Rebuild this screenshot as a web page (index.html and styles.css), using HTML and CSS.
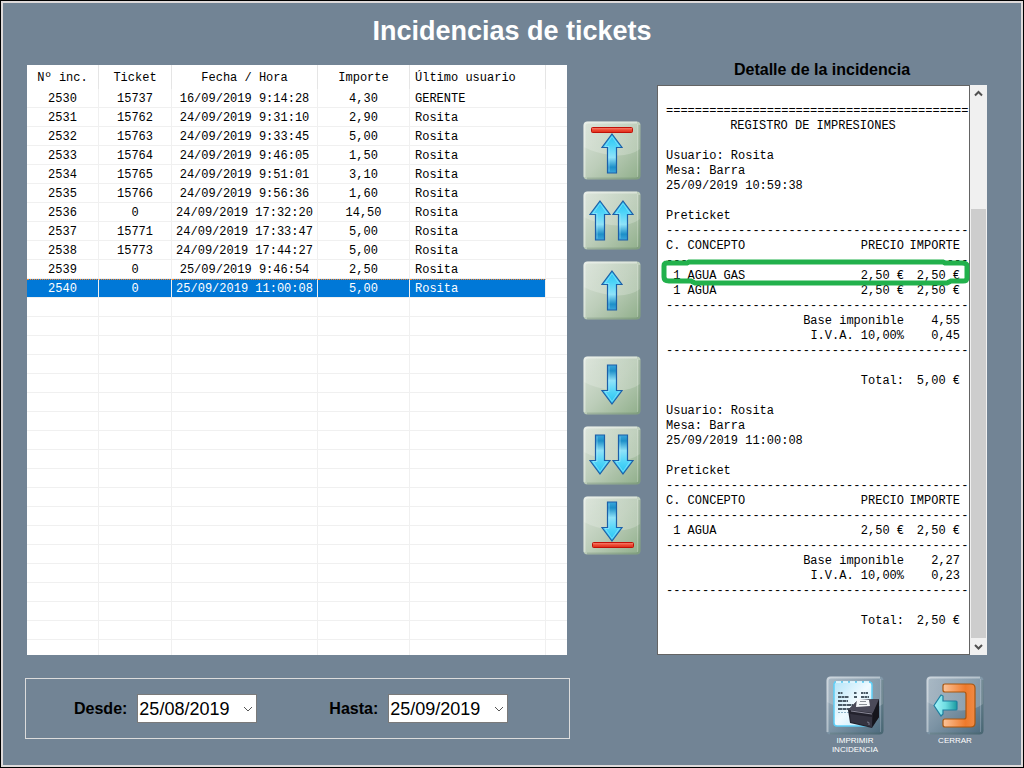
FILE: index.html
```html
<!DOCTYPE html>
<html lang="es">
    <head>
        <meta charset="utf-8">
        <title>Incidencias de tickets</title>
        <link rel="stylesheet" href="styles.css">
    </head>
    <body>
        <!-- shared shapes for the button icons -->
        <svg class="defs" width="0" height="0" aria-hidden="true">
            <defs>
                <linearGradient id="green" x1="0" y1="0" x2="1" y2="1">
                    <stop offset="0" stop-color="#dbe4da"/>
                    <stop offset="0.5" stop-color="#bccdb9"/>
                    <stop offset="1" stop-color="#8fae8a"/>
                </linearGradient>
                <linearGradient id="steel" x1="0" y1="0" x2="1" y2="1">
                    <stop offset="0" stop-color="#a6b6c3"/>
                    <stop offset="0.5" stop-color="#7c93a4"/>
                    <stop offset="1" stop-color="#4b697c"/>
                </linearGradient>
                <linearGradient id="gloss" x1="0" y1="0" x2="0" y2="1">
                    <stop offset="0" stop-color="#fff" stop-opacity="0.05"/>
                    <stop offset="1" stop-color="#fff" stop-opacity="0.22"/>
                </linearGradient>
                <linearGradient id="blue" x1="0" y1="0" x2="0" y2="1">
                    <stop offset="0" stop-color="#25c3f2"/>
                    <stop offset="0.3" stop-color="#4fd4f8"/>
                    <stop offset="0.6" stop-color="#8fe2f8"/>
                    <stop offset="0.85" stop-color="#1d8fc8"/>
                    <stop offset="1" stop-color="#3aa6dc"/>
                </linearGradient>
                <linearGradient id="red" x1="0" y1="0" x2="0" y2="1">
                    <stop offset="0" stop-color="#f58a78"/>
                    <stop offset="0.5" stop-color="#ee4a34"/>
                    <stop offset="1" stop-color="#dd2a18"/>
                </linearGradient>
                <linearGradient id="orange" x1="0" y1="0" x2="1" y2="0">
                    <stop offset="0" stop-color="#fbc49a"/>
                    <stop offset="0.7" stop-color="#ee7a2c"/>
                    <stop offset="1" stop-color="#f08a44"/>
                </linearGradient>
                <linearGradient id="teal" x1="0" y1="0" x2="1" y2="0">
                    <stop offset="0" stop-color="#a8f6fb"/>
                    <stop offset="0.5" stop-color="#6fdde2"/>
                    <stop offset="1" stop-color="#1a9aa0"/>
                </linearGradient>
                <linearGradient id="paper" x1="0" y1="0" x2="1" y2="1">
                    <stop offset="0" stop-color="#b4e4f8"/>
                    <stop offset="0.5" stop-color="#f0faff"/>
                    <stop offset="1" stop-color="#b8e6f8"/>
                </linearGradient>
            </defs>
            <symbol id="tile" viewBox="0 0 58 59">
                <rect x="0.5" y="0.5" width="57" height="58" rx="4"/>
                <path d="M1 5Q1 1 5 1H53Q57 1 57 5V28Q46 36 28 34Q12 32 1 26Z" fill="url(#gloss)"/>
                <path d="M1.5 56V5Q1.5 1.5 5 1.5H54" fill="none" stroke="#fff" stroke-opacity="0.4" stroke-width="2"/>
                <path d="M56.5 4V54Q56.5 57.5 53 57.5H4" fill="none" stroke="#3d5a4a" stroke-opacity="0.2" stroke-width="2"/>
                <path d="M54.500 3V56" fill="none" stroke="#fff" stroke-opacity="0.2"/>
            </symbol>
            <symbol id="arrow" viewBox="0 0 22 41">
                <path d="M11 1L21 14.500H15.500V40H6.500V14.500H1Z" fill="url(#blue)" stroke="#1c5fa8" stroke-width="1.200"/>
                <path d="M8 38.500V13.500H4L11 3.500L18 13.500" fill="none" stroke="#b9f1ff" stroke-opacity="0.55" stroke-width="0.800"/>
            </symbol>
            <symbol id="bar" viewBox="0 0 42 6">
                <rect x="0.5" y="0.5" width="41" height="5" rx="1" fill="url(#red)" stroke="#c01008"/>
            </symbol>
        </svg>

        <h1>Incidencias de tickets</h1>

        <main>
            <div id="TicketList">
                <table>
                    <colgroup>
                        <col class="c-num"><col class="c-ticket"><col class="c-date"><col class="c-amount"><col class="c-user"><col>
                    </colgroup>
                    <thead>
                        <tr><th>Nº inc.</th><th>Ticket</th><th>Fecha / Hora</th><th>Importe</th><th>Último usuario</th><th></th></tr>
                    </thead>
                    <tbody>
                        <tr><td>2530</td><td>15737</td><td>16/09/2019 9:14:28</td><td>4,30</td><td>GERENTE</td><td></td></tr>
                        <tr><td>2531</td><td>15762</td><td>24/09/2019 9:31:10</td><td>2,90</td><td>Rosita</td><td></td></tr>
                        <tr><td>2532</td><td>15763</td><td>24/09/2019 9:33:45</td><td>5,00</td><td>Rosita</td><td></td></tr>
                        <tr><td>2533</td><td>15764</td><td>24/09/2019 9:46:05</td><td>1,50</td><td>Rosita</td><td></td></tr>
                        <tr><td>2534</td><td>15765</td><td>24/09/2019 9:51:01</td><td>3,10</td><td>Rosita</td><td></td></tr>
                        <tr><td>2535</td><td>15766</td><td>24/09/2019 9:56:36</td><td>1,60</td><td>Rosita</td><td></td></tr>
                        <tr><td>2536</td><td>0</td><td>24/09/2019 17:32:20</td><td>14,50</td><td>Rosita</td><td></td></tr>
                        <tr><td>2537</td><td>15771</td><td>24/09/2019 17:33:47</td><td>5,00</td><td>Rosita</td><td></td></tr>
                        <tr><td>2538</td><td>15773</td><td>24/09/2019 17:44:27</td><td>5,00</td><td>Rosita</td><td></td></tr>
                        <tr><td>2539</td><td>0</td><td>25/09/2019 9:46:54</td><td>2,50</td><td>Rosita</td><td></td></tr>
                        <tr class="selected"><td>2540</td><td>0</td><td>25/09/2019 11:00:08</td><td>5,00</td><td>Rosita</td><td></td></tr>
                        <!-- empty rows down to the end of the list -->
                        <tr><td></td><td></td><td></td><td></td><td></td><td></td></tr>
                        <tr><td></td><td></td><td></td><td></td><td></td><td></td></tr>
                        <tr><td></td><td></td><td></td><td></td><td></td><td></td></tr>
                        <tr><td></td><td></td><td></td><td></td><td></td><td></td></tr>
                        <tr><td></td><td></td><td></td><td></td><td></td><td></td></tr>
                        <tr><td></td><td></td><td></td><td></td><td></td><td></td></tr>
                        <tr><td></td><td></td><td></td><td></td><td></td><td></td></tr>
                        <tr><td></td><td></td><td></td><td></td><td></td><td></td></tr>
                        <tr><td></td><td></td><td></td><td></td><td></td><td></td></tr>
                        <tr><td></td><td></td><td></td><td></td><td></td><td></td></tr>
                        <tr><td></td><td></td><td></td><td></td><td></td><td></td></tr>
                        <tr><td></td><td></td><td></td><td></td><td></td><td></td></tr>
                        <tr><td></td><td></td><td></td><td></td><td></td><td></td></tr>
                        <tr><td></td><td></td><td></td><td></td><td></td><td></td></tr>
                        <tr><td></td><td></td><td></td><td></td><td></td><td></td></tr>
                        <tr><td></td><td></td><td></td><td></td><td></td><td></td></tr>
                        <tr><td></td><td></td><td></td><td></td><td></td><td></td></tr>
                        <tr><td></td><td></td><td></td><td></td><td></td><td></td></tr>
                        <tr><td></td><td></td><td></td><td></td><td></td><td></td></tr>
                    </tbody>
                </table>
            </div>

            <div id="MoveButtons">
                <div class="group">
                    <button type="button" aria-label="Primero">
                        <svg viewBox="0 0 58 59"><use href="#tile" fill="url(#green)" width="58" height="59"/><use href="#bar" x="8" y="6" width="42" height="6"/><use href="#arrow" x="18" y="12" width="22" height="41"/></svg>
                    </button>
                    <button type="button" aria-label="Página anterior">
                        <svg viewBox="0 0 58 59"><use href="#tile" fill="url(#green)" width="58" height="59"/><use href="#arrow" x="6" y="9" width="22" height="41"/><use href="#arrow" x="29" y="9" width="22" height="41"/></svg>
                    </button>
                    <button type="button" aria-label="Anterior">
                        <svg viewBox="0 0 58 59"><use href="#tile" fill="url(#green)" width="58" height="59"/><use href="#arrow" x="18" y="9" width="22" height="41"/></svg>
                    </button>
                </div>
                <div class="group">
                    <button type="button" aria-label="Siguiente">
                        <svg viewBox="0 0 58 59"><use href="#tile" fill="url(#green)" width="58" height="59"/><g transform="matrix(1 0 0 -1 0 58)"><use href="#arrow" x="18" y="9" width="22" height="41"/></g></svg>
                    </button>
                    <button type="button" aria-label="Página siguiente">
                        <svg viewBox="0 0 58 59"><use href="#tile" fill="url(#green)" width="58" height="59"/><g transform="matrix(1 0 0 -1 0 58)"><use href="#arrow" x="6" y="9" width="22" height="41"/><use href="#arrow" x="29" y="9" width="22" height="41"/></g></svg>
                    </button>
                    <button type="button" aria-label="Último">
                        <svg viewBox="0 0 58 59"><use href="#tile" fill="url(#green)" width="58" height="59"/><use href="#bar" x="9" y="46" width="42" height="6"/><g transform="matrix(1 0 0 -1 0 58)"><use href="#arrow" x="18" y="12" width="22" height="41"/></g></svg>
                    </button>
                </div>
            </div>

            <section id="Detail">
                <h2>Detalle de la incidencia</h2>
                <div id="DetailBox">
                    <div id="Receipt">
                        <table>
                            <colgroup><col><col class="c-price"><col class="c-total"></colgroup>
                            <tr><td colspan="3"></td></tr>
                            <tr><td colspan="3">==========================================</td></tr>
                            <tr><td colspan="3" class="center">REGISTRO DE IMPRESIONES</td></tr>
                            <tr><td colspan="3"></td></tr>
                            <tr><td colspan="3">Usuario: Rosita</td></tr>
                            <tr><td colspan="3">Mesa: Barra</td></tr>
                            <tr><td colspan="3">25/09/2019 10:59:38</td></tr>
                            <tr><td colspan="3"></td></tr>
                            <tr><td colspan="3">Preticket</td></tr>
                            <tr><td colspan="3">------------------------------------------</td></tr>
                            <tr><td>C. CONCEPTO</td><td>PRECIO</td><td>IMPORTE</td></tr>
                            <tr><td colspan="3">------------------------------------------</td></tr>
                            <tr class="marked">
                                <td> 1 AGUA GAS<svg class="mark" viewBox="0 0 310 30" preserveAspectRatio="none" aria-hidden="true"><path d="M5 6H26L28 5H282L284 6H301Q306 6 306 9V21Q306 24 302 24H290L286 26H34L30 24H8Q3 24 3 20V9Q3 6 6 6Z"/></svg></td>
                                <td>2,50 €</td><td>2,50 €</td>
                            </tr>
                            <tr><td> 1 AGUA</td><td>2,50 €</td><td>2,50 €</td></tr>
                            <tr><td colspan="3">------------------------------------------</td></tr>
                            <tr><td colspan="2" class="right">Base imponible</td><td>4,55</td></tr>
                            <tr><td colspan="2" class="right">I.V.A. 10,00%</td><td>0,45</td></tr>
                            <tr><td colspan="3">------------------------------------------</td></tr>
                            <tr><td colspan="3"></td></tr>
                            <tr><td colspan="2" class="right">Total:</td><td>5,00 €</td></tr>
                            <tr><td colspan="3"></td></tr>
                            <tr><td colspan="3">Usuario: Rosita</td></tr>
                            <tr><td colspan="3">Mesa: Barra</td></tr>
                            <tr><td colspan="3">25/09/2019 11:00:08</td></tr>
                            <tr><td colspan="3"></td></tr>
                            <tr><td colspan="3">Preticket</td></tr>
                            <tr><td colspan="3">------------------------------------------</td></tr>
                            <tr><td>C. CONCEPTO</td><td>PRECIO</td><td>IMPORTE</td></tr>
                            <tr><td colspan="3">------------------------------------------</td></tr>
                            <tr><td> 1 AGUA</td><td>2,50 €</td><td>2,50 €</td></tr>
                            <tr><td colspan="3">------------------------------------------</td></tr>
                            <tr><td colspan="2" class="right">Base imponible</td><td>2,27</td></tr>
                            <tr><td colspan="2" class="right">I.V.A. 10,00%</td><td>0,23</td></tr>
                            <tr><td colspan="3">------------------------------------------</td></tr>
                            <tr><td colspan="3"></td></tr>
                            <tr><td colspan="2" class="right">Total:</td><td>2,50 €</td></tr>
                        </table>
                    </div>
                    <div id="ScrollBar">
                        <button type="button" aria-label="Subir"><svg viewBox="0 0 15 17"><path d="M4 10.500L7.500 7L11 10.500"/></svg></button>
                        <div class="track"><div class="thumb"></div></div>
                        <button type="button" aria-label="Bajar"><svg viewBox="0 0 15 17"><path d="M4 7L7.500 10.500L11 7"/></svg></button>
                    </div>
                </div>
            </section>
        </main>

        <footer>
            <form id="Dates">
                <label for="desde">Desde:</label>
                <div class="date">
                    <select id="desde"><option>25/08/2019</option></select>
                    <svg viewBox="0 0 10 6" aria-hidden="true"><path d="M1 1L5 5L9 1"/></svg>
                </div>
                <label for="hasta">Hasta:</label>
                <div class="date">
                    <select id="hasta"><option>25/09/2019</option></select>
                    <svg viewBox="0 0 10 6" aria-hidden="true"><path d="M1 1L5 5L9 1"/></svg>
                </div>
            </form>
            <div id="Actions">
                <button type="button">
                    <svg viewBox="0 0 58 59" aria-hidden="true">
                        <use href="#tile" fill="url(#steel)" width="58" height="59"/>
                        <path d="M9 6H43Q46 6 46 9V50H11Q8 50 8 47V8Z" fill="url(#paper)" stroke="#5fd0f8" stroke-width="1.500"/>
                        <path d="M10 6H44" stroke="#fff" stroke-width="1.500" stroke-dasharray="5 2"/>
                        <g stroke="#4a5a66" stroke-width="2">
                            <path d="M12 17H17M28 17H31M35 17H42" stroke-dasharray="2 0.500"/>
                            <path d="M12 21H23M28 21H31M35 21H43" stroke-dasharray="3 0.500"/>
                            <path d="M12 25H22M12 29H27M12 33H24" stroke-dasharray="4 0.500"/>
                        </g>
                        <path d="M12 36.500H24" stroke="#8eb4c8" stroke-dasharray="2 1"/>
                        <path d="M22 34L32 24L53 23L53 41L46 52L24 47Z" fill="#23222d"/>
                        <path d="M22 34L32 24L53 23L47 37Z" fill="#4b4a59"/>
                        <path d="M24 38L46 41V51L25 46Z" fill="#343340"/>
                        <path d="M47 37L53 24V41L46 51Z" fill="#15151c"/>
                        <path d="M25 35L46 38" stroke="#8a8998" stroke-width="1.200"/>
                        <path d="M31 23L43 24L44 30L30 31Z" fill="#f6f8fa"/>
                        <path d="M34 25.500H40M33 28.500H41" stroke="#8d9298" stroke-width="1"/>
                        <path d="M41 46L43 46.500V49" fill="none" stroke="#777688"/>
                    </svg>
                    <span>IMPRIMIR INCIDENCIA</span>
                </button>
                <button type="button">
                    <svg viewBox="0 0 58 59" aria-hidden="true">
                        <use href="#tile" fill="url(#steel)" width="58" height="59"/>
                        <path d="M19 8H45Q49 8 49 12V47Q49 51 45 51H19Q17 51 17 49V45Q17 43 19 43H38Q40 43 40 41V18Q40 16 38 16H19Q17 16 17 14V10Q17 8 19 8Z" fill="url(#orange)" stroke="#a8560f" stroke-width="1.200"/>
                        <path d="M8 29.500L15 19L17 20V25H30Q31 25 31 26V33Q31 34 30 34H17V38L15 40Z" fill="url(#teal)" stroke="#1f7fa0" stroke-width="1.200"/>
                    </svg>
                    <span>CERRAR</span>
                </button>
            </div>
        </footer>
    </body>
</html>
```
FILE: styles.css
```css
*{
    box-sizing: border-box;
}

html{
    height: 100%;
    background-color: black;
    padding: 1px;
}

body{
    height: 100%;
    margin: 0;
    border: 2px solid #dedada;
    background-color: #728495;
    font-family: "Liberation Sans", Arial, sans-serif;
    color: black;
    display: flex;
    flex-direction: column;
}

.defs{
    position: absolute;
}

h1{
    margin: 0;
    color: white;
    font-size: 27px;
    line-height: 57px;
    text-align: center;
}

button{
    border: none;
    padding: 0;
    background: none;
    cursor: pointer;
}

table{
    width: 100%;
    table-layout: fixed;
    border-collapse: separate;
    border-spacing: 0;
    font-family: "Liberation Mono", "Courier New", monospace;
    font-size: 12px;
}

main{
    flex: 1;
    min-height: 0;
    padding: 0 34px 0 24px;
    display: grid;
    grid-template-columns: minmax(0, 540fr) 58px minmax(0, 330fr);
    grid-template-rows: minmax(0, 1fr);
    column-gap: 16px;
}

/* list of tickets */
#TicketList{
    margin-top: 5px;
    background-color: white;
    overflow: hidden;
}

#TicketList th{
    height: 24px;
    padding: 2px 0 0;
    border-right: 1px solid #e5e5e5;
    font-weight: normal;
}

#TicketList td{
    height: 19px;
    padding: 2px 0 0;
    border-right: 1px solid #f0f0f0;
    border-bottom: 1px solid #f0f0f0;
    line-height: 16px;
    text-align: center;
    white-space: nowrap;
}

#TicketList th:nth-child(5), #TicketList td:nth-child(5){
    padding-left: 5px;
    text-align: left;
}

#TicketList th:last-child, #TicketList td:last-child{
    border-right: none;
}

#TicketList .selected td:not(:last-child){
    padding-top: 1px;
    border-top: 1px dotted #ff8728;
    background-color: #0078d7;
    color: white;
}

.c-num{ width: 72px; }
.c-ticket{ width: 73px; }
.c-date{ width: 146px; }
.c-amount{ width: 92px; }
.c-user{ width: 136px; }

/* arrows between the list and the detail */
#MoveButtons{
    padding-top: 61px;
    display: flex;
    flex-direction: column;
    gap: 36px;
}

.group{
    display: flex;
    flex-direction: column;
    gap: 11px;
}

.group svg, #Actions svg{
    display: block;
    width: 58px;
    height: 59px;
}

/* detail of the selected ticket */
#Detail{
    display: flex;
    flex-direction: column;
}

h2{
    margin: 0 0 5px;
    font-size: 16px;
    line-height: 20px;
    text-align: center;
}

#DetailBox{
    flex: 1;
    min-height: 0;
    background-color: white;
    display: flex;
}

#Receipt{
    flex: 1;
    min-width: 0;
    padding: 3px 9px 0 8px;
    border: 1px solid #646464;
}

#Receipt td{
    height: 15px;
    padding: 0;
    line-height: 15px;
    white-space: pre;
}

#Receipt td:nth-child(n+2), #Receipt .right{
    text-align: right;
}

#Receipt .center{
    text-align: center;
}

.c-price, .c-total{
    width: 56px;
}

.marked{
    position: relative;
}

.mark{
    position: absolute;
    left: -5px;
    top: -12px;
    width: calc(100% + 16px);
    height: 30px;
    fill: none;
    stroke: #22b14c;
    stroke-width: 5px;
}

#ScrollBar{
    width: 17px;
    padding: 0 1px;
    background-color: #f0f0f0;
    display: flex;
    flex-direction: column;
}

#ScrollBar button{
    height: 17px;
}

#ScrollBar svg{
    display: block;
    width: 15px;
    height: 17px;
    fill: none;
    stroke: #505050;
    stroke-width: 2px;
}

.track{
    flex: 1;
    display: flex;
    flex-direction: column;
    justify-content: flex-end;
}

.thumb{
    height: 80%;
    background-color: #cdcdcd;
}

/* dates and actions */
footer{
    padding: 21px 37px 11px 22px;
    display: grid;
    grid-template-columns: minmax(0, 545fr) minmax(0, 414fr);
    align-items: start;
}

#Dates{
    height: 61px;
    margin-top: 2px;
    padding-left: 48px;
    border: 1px solid #dcdcdc;
    display: flex;
    align-items: center;
}

#Dates label{
    margin-right: 10px;
    font-size: 16px;
    font-weight: bold;
}

.date{
    position: relative;
    margin-right: 72px;
}

.date:last-child{
    margin-right: 0;
}

.date select{
    display: block;
    width: 120px;
    height: 29px;
    padding: 0 0 0 1px;
    border: 1px solid #7a7a7a;
    border-radius: 0;
    appearance: none;
    background-color: white;
    color: black;
    font-family: inherit;
    font-size: 18px;
}

.date svg{
    position: absolute;
    right: 4px;
    top: 12px;
    width: 10px;
    height: 6px;
    fill: none;
    stroke: #555;
    pointer-events: none;
}

#Actions{
    display: flex;
    justify-content: flex-end;
    gap: 42px;
}

#Actions button{
    width: 58px;
    display: flex;
    flex-direction: column;
    align-items: center;
    color: white;
    font-family: inherit;
    font-size: 8px;
    line-height: 9px;
}

#Actions span{
    padding-top: 1px;
}
```
